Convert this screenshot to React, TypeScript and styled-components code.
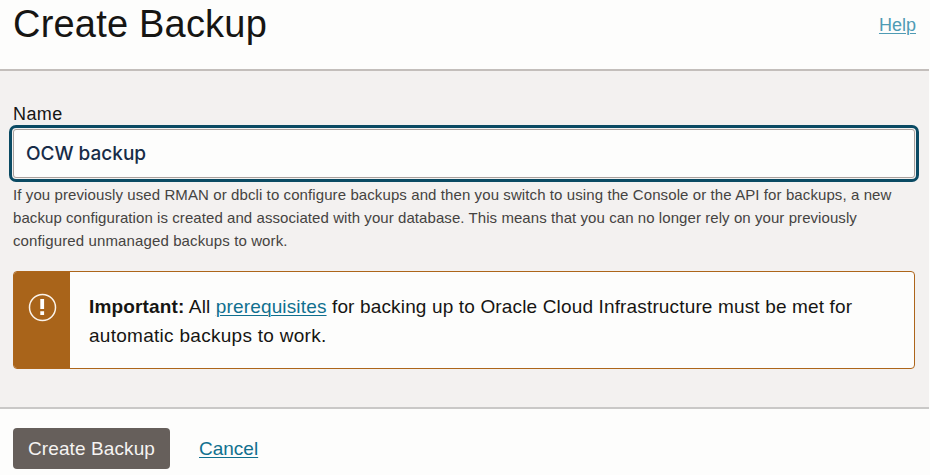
import React from "react";
import styled, { createGlobalStyle } from "styled-components";

const GlobalStyle = createGlobalStyle`
  * { box-sizing: border-box; }
  body {
    margin: 0;
    overflow: hidden;
    background: #fdfdfc;
    font-family: "Liberation Sans", Arial, Helvetica, sans-serif;
    color: #161513;
  }
`;

const Dialog = styled.main`
  width: 929px;
  height: 475px;
  display: flex;
  flex-direction: column;
`;

const Header = styled.header`
  height: 71px;
  flex: none;
  display: flex;
  justify-content: space-between;
  padding: 0 13px;
  border-bottom: 2px solid #c3bebb;
`;

const Title = styled.h1`
  margin: 3px 0 0;
  font-size: 38px;
  line-height: 42px;
  font-weight: 400;
  letter-spacing: 0.2px;
  white-space: nowrap;
`;

const Link = styled.a<{ $pale?: boolean }>`
  color: ${(p) => (p.$pale ? "#4f9bb4" : "#10708f")};
  text-decoration: underline;
  text-decoration-thickness: 1px;
  text-underline-offset: 2px;
`;

const HelpSlot = styled.div`
  margin-top: 14px;
  font-size: 18px;
  line-height: 22px;
`;

const Body = styled.section`
  height: 336px;
  flex: none;
  padding: 32px 14px 0 13px;
  background: #f3f1f0;
`;

const Label = styled.label`
  display: block;
  height: 26px;
  font-size: 18px;
  line-height: 22px;
  letter-spacing: 0.4px;
`;

const NameInput = styled.input`
  display: block;
  width: 902px;
  height: 49px;
  padding: 0 12px;
  border: 1px solid #aaa19d;
  border-radius: 3px;
  outline: 3px solid #0a4a63;
  outline-offset: 1px;
  background: #fdfdfc;
  color: #172c48;
  font-family: Inter, sans-serif;
  font-size: 19px;
  font-weight: 500;
`;

const Hint = styled.p`
  margin: 5px 0 0;
  font-size: 15px;
  line-height: 23px;
  color: #454341;
`;

const Line = styled.span<{ $spacing?: number }>`
  display: block;
  white-space: nowrap;
  letter-spacing: ${(p) => p.$spacing ?? 0}px;
`;

const Alert = styled.div`
  display: flex;
  width: 902px;
  height: 98px;
  margin-top: 19px;
  border: 1px solid #ad651a;
  border-radius: 4px;
  overflow: hidden;
  background: #fdfdfc;
`;

const AlertMark = styled.div`
  width: 56px;
  flex: none;
  padding: 21px 0 0 14px;
  background: #a9641a;
`;

const AlertText = styled.p`
  margin: 20px 0 0 19px;
  font-size: 19px;
  line-height: 29px;
`;

const Footer = styled.footer`
  flex: 1;
  display: flex;
  align-items: flex-start;
  padding: 19px 13px 0;
  border-top: 2px solid #c9c8c7;
`;

const SubmitButton = styled.button`
  width: 157px;
  height: 41px;
  padding: 0;
  border: 0;
  border-radius: 4px;
  background: #665f5b;
  color: #f5f3f2;
  font: inherit;
  font-size: 19px;
  letter-spacing: 0.1px;
`;

const CancelSlot = styled.div`
  margin: 10px 0 0 29px;
  font-size: 19px;
  line-height: 22px;
`;

const WarningIcon = () => (
  <svg width="29" height="29" viewBox="0 0 29 29" fill="none">
    <circle cx="14.5" cy="14.5" r="13" stroke="#fbf3ea" strokeWidth="1.5" />
    <path d="M12.3 6h3.8v10h-3.8zM12.3 18.2h3.8v3.8h-3.8z" fill="#fff" />
  </svg>
);

export default function App() {
  return (
    <>
      <GlobalStyle />
      <Dialog>
        <Header>
          <Title>Create Backup</Title>
          <HelpSlot>
            <Link $pale>Help</Link>
          </HelpSlot>
        </Header>
        <Body>
          <Label htmlFor="backup-name">Name</Label>
          <NameInput id="backup-name" defaultValue="OCW backup" />
          <Hint>
            <Line $spacing={0.095}>
              If you previously used RMAN or dbcli to configure backups and then you switch to using the Console or the API for backups, a new
            </Line>
            <Line $spacing={0.07}>
              backup configuration is created and associated with your database. This means that you can no longer rely on your previously
            </Line>
            <Line $spacing={0.12}>configured unmanaged backups to work.</Line>
          </Hint>
          <Alert>
            <AlertMark>
              <WarningIcon />
            </AlertMark>
            <AlertText>
              <Line $spacing={0.15}>
                <b>Important:</b> All <Link>prerequisites</Link> for backing up to Oracle Cloud Infrastructure must be met for
              </Line>
              <Line $spacing={0.28}>automatic backups to work.</Line>
            </AlertText>
          </Alert>
        </Body>
        <Footer>
          <SubmitButton>Create Backup</SubmitButton>
          <CancelSlot>
            <Link>Cancel</Link>
          </CancelSlot>
        </Footer>
      </Dialog>
    </>
  );
}
